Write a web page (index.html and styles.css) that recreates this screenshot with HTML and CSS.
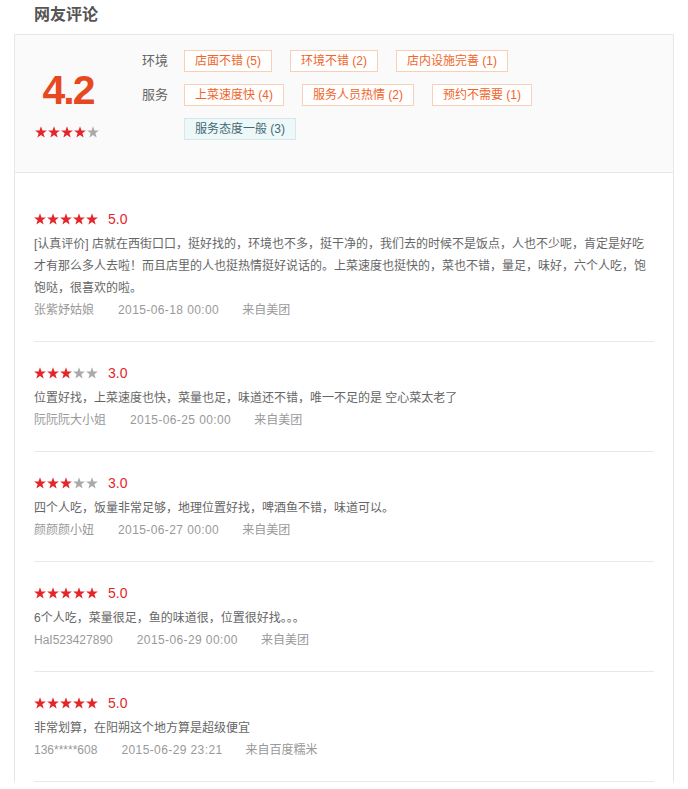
FILE: index.html
```html
<!DOCTYPE html>
<html lang="zh-CN">
<head>
<meta charset="utf-8">
<title>网友评论</title>
<link rel="stylesheet" href="styles.css">
</head>
<body>
<svg class="defs" width="0" height="0" aria-hidden="true">
  <symbol id="star" viewBox="0 0 12 12">
    <polygon points="6,0.3 7.47,4.48 11.9,4.58 8.38,7.27 9.64,11.52 6,9 2.36,11.52 3.62,7.27 0.1,4.58 4.53,4.48"/>
  </symbol>
</svg>

<h2 class="title">网友评论</h2>

<div class="panel">
  <div class="summary">
    <div class="score-col">
      <div class="score">4.2</div>
      <div class="stars">
        <svg class="star on"><use href="#star"/></svg>
        <svg class="star on"><use href="#star"/></svg>
        <svg class="star on"><use href="#star"/></svg>
        <svg class="star on"><use href="#star"/></svg>
        <svg class="star off"><use href="#star"/></svg>
      </div>
    </div>
    <div class="tag-col">
      <div class="tag-row">
        <span class="tag-label">环境</span>
        <div class="tags">
          <span class="tag">店面不错 (5)</span>
          <span class="tag">环境不错 (2)</span>
          <span class="tag">店内设施完善 (1)</span>
        </div>
      </div>
      <div class="tag-row">
        <span class="tag-label">服务</span>
        <div class="tags">
          <span class="tag">上菜速度快 (4)</span>
          <span class="tag">服务人员热情 (2)</span>
          <span class="tag">预约不需要 (1)</span>
          <span class="tag neutral">服务态度一般 (3)</span>
        </div>
      </div>
    </div>
  </div>

  <ul class="reviews">
    <li class="review">
      <div class="rating">
        <span class="stars">
          <svg class="star on"><use href="#star"/></svg>
          <svg class="star on"><use href="#star"/></svg>
          <svg class="star on"><use href="#star"/></svg>
          <svg class="star on"><use href="#star"/></svg>
          <svg class="star on"><use href="#star"/></svg>
        </span>
        <span class="rate">5.0</span>
      </div>
      <p class="text">[认真评价] 店就在西街口口，挺好找的，环境也不多，挺干净的，我们去的时候不是饭点，人也不少呢，肯定是好吃才有那么多人去啦！而且店里的人也挺热情挺好说话的。上菜速度也挺快的，菜也不错，量足，味好，六个人吃，饱饱哒，很喜欢的啦。</p>
      <div class="meta"><span class="user">张紫妤姑娘</span><span class="date">2015-06-18 00:00</span><span class="src">来自美团</span></div>
    </li>
    <li class="review">
      <div class="rating">
        <span class="stars">
          <svg class="star on"><use href="#star"/></svg>
          <svg class="star on"><use href="#star"/></svg>
          <svg class="star on"><use href="#star"/></svg>
          <svg class="star off"><use href="#star"/></svg>
          <svg class="star off"><use href="#star"/></svg>
        </span>
        <span class="rate">3.0</span>
      </div>
      <p class="text">位置好找，上菜速度也快，菜量也足，味道还不错，唯一不足的是 空心菜太老了</p>
      <div class="meta"><span class="user">阮阮阮大小姐</span><span class="date">2015-06-25 00:00</span><span class="src">来自美团</span></div>
    </li>
    <li class="review">
      <div class="rating">
        <span class="stars">
          <svg class="star on"><use href="#star"/></svg>
          <svg class="star on"><use href="#star"/></svg>
          <svg class="star on"><use href="#star"/></svg>
          <svg class="star off"><use href="#star"/></svg>
          <svg class="star off"><use href="#star"/></svg>
        </span>
        <span class="rate">3.0</span>
      </div>
      <p class="text">四个人吃，饭量非常足够，地理位置好找，啤酒鱼不错，味道可以。</p>
      <div class="meta"><span class="user">颜颜颜小妞</span><span class="date">2015-06-27 00:00</span><span class="src">来自美团</span></div>
    </li>
    <li class="review">
      <div class="rating">
        <span class="stars">
          <svg class="star on"><use href="#star"/></svg>
          <svg class="star on"><use href="#star"/></svg>
          <svg class="star on"><use href="#star"/></svg>
          <svg class="star on"><use href="#star"/></svg>
          <svg class="star on"><use href="#star"/></svg>
        </span>
        <span class="rate">5.0</span>
      </div>
      <p class="text">6个人吃，菜量很足，鱼的味道很，位置很好找。。。</p>
      <div class="meta"><span class="user">HaI523427890</span><span class="date">2015-06-29 00:00</span><span class="src">来自美团</span></div>
    </li>
    <li class="review">
      <div class="rating">
        <span class="stars">
          <svg class="star on"><use href="#star"/></svg>
          <svg class="star on"><use href="#star"/></svg>
          <svg class="star on"><use href="#star"/></svg>
          <svg class="star on"><use href="#star"/></svg>
          <svg class="star on"><use href="#star"/></svg>
        </span>
        <span class="rate">5.0</span>
      </div>
      <p class="text">非常划算，在阳朔这个地方算是超级便宜</p>
      <div class="meta"><span class="user">136*****608</span><span class="date">2015-06-29 23:21</span><span class="src">来自百度糯米</span></div>
    </li>
  </ul>
</div>
</body>
</html>
```

FILE: styles.css
```css
html, body {
  margin: 0;
  padding: 0;
  background: #fff;
}

body {
  font-family: "Liberation Sans", "Noto Sans CJK SC", sans-serif;
  font-size: 12px;
  color: #666;
  overflow: hidden;
}

.defs {
  position: absolute;
  width: 0;
  height: 0;
}

.title {
  margin: 0;
  padding: 4px 0 0 34px;
  font-size: 16px;
  line-height: 22px;
  font-weight: bold;
  color: #555;
}

.panel {
  margin: 8px 0 0 14px;
  width: 658px;
  border: 1px solid #e6e6e6;
  border-bottom: none;
}

.summary {
  display: flex;
  height: 137px;
  background: #fafafa;
  border-bottom: 1px solid #e6e6e6;
}

.score-col {
  margin-left: 20px;
  width: 64px;
  padding-top: 35px;
  display: flex;
  flex-direction: column;
  align-items: center;
}

.score {
  font-size: 41px;
  line-height: 41px;
  font-weight: bold;
  color: #e8481f;
  letter-spacing: -2px;
  margin-right: -2px;
}

.score-col .stars {
  margin-top: 15px;
}

.stars {
  display: inline-flex;
  gap: 1px;
}

.star {
  width: 12px;
  height: 12px;
  display: block;
}

.star.on {
  fill: #e4262b;
}

.star.off {
  fill: #aaa;
}

.tag-col {
  margin-left: 43px;
  padding-top: 15px;
  display: flex;
  flex-direction: column;
  gap: 12px;
}

.tag-row {
  display: flex;
  align-items: flex-start;
}

.tag-label {
  width: 26px;
  margin-right: 16px;
  font-size: 13px;
  line-height: 22px;
  color: #666;
}

.tags {
  display: flex;
  flex-wrap: wrap;
  column-gap: 18px;
  row-gap: 12px;
  max-width: 380px;
}

.tag {
  display: inline-block;
  height: 20px;
  line-height: 20px;
  padding: 0 10px;
  border: 1px solid #f8d0b8;
  background: #fff;
  color: #f0652a;
  font-size: 12px;
  white-space: nowrap;
}

.tag.neutral {
  border-color: #d2e8ea;
  background: #eff8f8;
  color: #3f6a74;
}

.reviews {
  list-style: none;
  margin: 0;
  padding: 15px 19px 0;
}

.review {
  padding: 23px 0 20px;
  border-bottom: 1px solid #e8e8e8;
}

.rating {
  display: flex;
  align-items: center;
  height: 16px;
}

.rate {
  margin-left: 10px;
  font-size: 14px;
  line-height: 16px;
  color: #e4262b;
}

.text {
  margin: 6px 0 0;
  line-height: 22px;
  font-size: 12px;
  color: #666;
}

.meta {
  line-height: 22px;
  font-size: 12px;
  color: #999;
}

.meta .user {
  margin-right: 24px;
}

.meta .date {
  margin-right: 23px;
  letter-spacing: 0.4px;
}
```
